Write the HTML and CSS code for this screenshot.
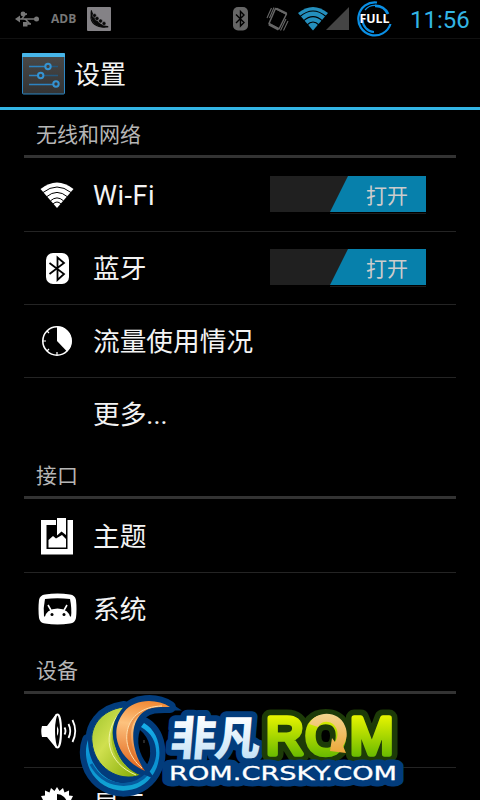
FILE: index.html
```
<!DOCTYPE html>
<html lang="zh-CN">

<head>
    <meta charset="UTF-8">
    <meta name="viewport" content="width=device-width, initial-scale=1.0">
    <title>设置</title>
    <link rel="stylesheet" href="styles.css">
</head>

<body>
    <div class="status">
        <svg class="usb" width="24" height="16" viewBox="0 0 24 16">
            <path d="M3 8H21M6 8C9 8 8 3 12 3H8M9 8C13 8 12 13 16 13H10" fill="none" stroke="#777" stroke-width="1.6" />
            <path d="M0 8L5 4.500V11.500Z" fill="#777" />
            <circle cx="21.500" cy="8" r="2.500" fill="#777" />
            <circle cx="8" cy="3" r="2.400" fill="#777" />
            <rect x="8" y="11" width="4.500" height="4.500" fill="#777" />
        </svg>
        <span class="adb">ADB</span>
        <svg class="pea" width="24" height="24" viewBox="0 0 24 24">
            <rect width="24" height="24" rx="1" fill="#848286" />
            <path d="M4 3C2 12 7 21 21 20.500Q22 20 21 19C15 19 8 14 5 4Q4.500 2.500 4 3Z" fill="#080808" />
            <g fill="#080808" stroke="#848286" stroke-width=".5">
                <circle cx="7.500" cy="8.500" r="1.900" />
                <circle cx="10" cy="11.500" r="2" />
                <circle cx="13.500" cy="14" r="2" />
                <circle cx="17" cy="16.500" r="1.900" />
            </g>
            <path d="M3.500 8C4 15 10 20 20 20.500C12 21.500 2 18 3.500 8Z" fill="#080808" />
        </svg>
        <div class="status-right">
            <svg class="s-bt" width="15" height="24" viewBox="0 0 15 24">
                <rect width="15" height="23.500" rx="5" fill="#666" />
                <path d="M3 7.500L11 15.500L7.500 19V4.500L11 8L3 16" fill="none" stroke="#000" stroke-width="1.400" />
            </svg>
            <svg class="vibrate" width="24" height="26" viewBox="0 0 24 26">
                <path d="M9.500 2.500L20.500 8L13 23L3 17.500Z" fill="none" stroke="#666" stroke-width="1.500" stroke-linejoin="round" />
                <path d="M9 3L11 1.800L21 6.500L20.500 9ZM3 17L13 22L12 24.500L2.500 19.500Z" fill="#666" />
                <path d="M1 12L5.500 2M3.500 12L8 1.500M14.500 24.500L20 13M17.500 24.500L22 15" fill="none" stroke="#666" stroke-width="1.100" />
            </svg>
            <svg class="s-wifi" width="30" height="24" viewBox="0 0 30 24">
                <path d="M0 6Q15 -6 30 6L15 23.500Z" fill="#248fbd" />
                <path d="M2 9.500Q15 -1.500 28 9.500M5.500 13.800Q15 5.500 24.500 13.800M9 18Q15 12 21 18" fill="none" stroke="#000" stroke-width="1.100" />
            </svg>
            <svg class="signal" width="23" height="23" viewBox="0 0 23 23">
                <path d="M0 23L23 0V23Z" fill="#444" />
            </svg>
            <svg class="battery" width="36" height="36" viewBox="0 0 36 36">
                <g fill="none" stroke="#0a90e6">
                    <path d="M20 1.500A16.500 16.500 0 1 0 33.500 23" stroke-width="2.200" />
                    <path d="M18 4.800A13.500 13.500 0 0 1 31 13" stroke-width="2.800" />
                    <path d="M5.500 19A12.500 12.500 0 0 0 17 31" stroke-width="2.200" />
                    <path d="M8 9A13 13 0 0 1 20 4.500" stroke-width="1.200" />
                </g>
                <text x="2.500" y="22" textLength="30" lengthAdjust="spacingAndGlyphs" class="full">FULL</text>
            </svg>
            <span class="clock">11:56</span>
        </div>
    </div>

    <div class="header">
        <svg width="44" height="42" viewBox="0 0 44 42">
            <defs>
                <linearGradient id="panel" x2="0" y2="1">
                    <stop offset="0" stop-color="#494949" />
                    <stop offset="1" stop-color="#333" />
                </linearGradient>
            </defs>
            <rect x=".5" y=".5" width="42" height="40.500" rx="1" fill="url(#panel)" stroke="#2d86c2" />
            <path d="M0 4V1Q0 0 1 0H42Q43 0 43 1V4Z" fill="#47b5e9" />
            <g fill="none" stroke="#2c83c1" stroke-width="1.400">
                <path d="M7 13.500H23M7 22.500H16M7 31.500H32" />
                <path d="M29 13.500H36M22 22.500H36" stroke="#24587e" />
                <g stroke="#3593d2" stroke-width="2">
                    <circle cx="26" cy="13.500" r="2.700" />
                    <circle cx="18.700" cy="22.500" r="2.700" />
                    <circle cx="34" cy="31" r="2.700" />
                </g>
            </g>
        </svg>
        <h1>设置</h1>
    </div>

    <div class="list">
        <h2>无线和网络</h2>
        <ul>
            <li>
                <div class="icon">
                    <svg width="34" height="26" viewBox="0 0 34 26">
                        <path d="M.5 7Q17 -6 33.500 7L17 26Z" fill="#fff" />
                        <path d="M3 10.500Q17 -.5 31 10.500M6.500 14.800Q17 6 27.500 14.800M10.500 18.800Q17 13 23.500 18.800M13 22Q17 18 21 22" fill="none" stroke="#000" stroke-width="1" />
                    </svg>
                </div>
                <span class="latin">Wi-Fi</span>
                <div class="switch"><b>打开</b></div>
            </li>
            <li>
                <div class="icon">
                    <svg width="23" height="31" viewBox="0 0 23 31">
                        <rect width="23" height="31" rx="7" fill="#fff" />
                        <path d="M3.500 10L18 21L11.500 27V4.500L18 10L3.500 21" fill="none" stroke="#000" stroke-width="1.800" />
                    </svg>
                </div>
                <span>蓝牙</span>
                <div class="switch"><b>打开</b></div>
            </li>
            <li>
                <div class="icon">
                    <svg width="30" height="30" viewBox="0 0 30 30">
                        <circle cx="15" cy="15" r="14.200" fill="none" stroke="#fff" stroke-width="1.600" />
                        <path d="M15 15V.5A14.500 14.500 0 0 1 25 25.500Z" fill="#fff" />
                        <path d="M1 15H4M15 29V26M5 5L7 7M5 25L7 23" stroke="#fff" stroke-width="1.200" />
                    </svg>
                </div>
                <span>流量使用情况</span>
            </li>
            <li>
                <div class="icon"></div>
                <span>更多...</span>
            </li>
        </ul>

        <h2>接口</h2>
        <ul>
            <li>
                <div class="icon">
                    <svg width="34" height="37" viewBox="0 0 34 37">
                        <path d="M1 2H16V7H6.500V31H27.500V2H33V36.500H1Z" fill="#fff" />
                        <path d="M17 0H26V17L21.500 13.500L17 17.500Z" fill="#fff" />
                        <path d="M8.500 22L13 18L16 20.500L22 17L26 21V29.500H8.500Z" fill="#fff" />
                    </svg>
                </div>
                <span>主题</span>
            </li>
            <li>
                <div class="icon">
                    <svg width="39" height="32" viewBox="0 0 39 32">
                        <path d="M7 1.500Q19.500 -.5 32 1.500Q37 2 38 7Q39 16 38 25Q37 30 32 30.500Q19.500 32.500 7 30.500Q2 30 1 25Q0 16 1 7Q2 2 7 1.500Z" fill="#fff" />
                        <path d="M7 6Q19.500 4.500 32 6Q34 16 33 23.500H6Q5 15 7 6Z" fill="#000" />
                        <path d="M6 26Q8 15.500 19.500 15.500Q31 15.500 33 26Z" fill="#fff" />
                        <path d="M10 12L14 19M29 12L25 19" stroke="#fff" stroke-width="1.600" />
                        <circle cx="14" cy="21.500" r="1.500" fill="#000" />
                        <circle cx="26" cy="21.500" r="1.500" fill="#000" />
                    </svg>
                </div>
                <span>系统</span>
            </li>
        </ul>

        <h2>设备</h2>
        <ul>
            <li>
                <div class="icon">
                    <svg class="sound" width="36" height="36" viewBox="0 0 36 36">
                        <path d="M1 13H6L15 1V35L6 24H1Q-.5 18 1 13Z" fill="#fff" />
                        <ellipse cx="16.500" cy="18" rx="3.500" ry="16.500" fill="#000" stroke="#fff" stroke-width="2" />
                        <path d="M16 13Q19 18 16 23Z" fill="#fff" />
                        <path d="M23.500 14.500Q25.500 18 23.500 21.500M27.500 11Q31 18 27.500 25M31.500 7Q37 18 31.500 29" fill="none" stroke="#fff" stroke-width="1.800" />
                    </svg>
                </div>
                <span>声音</span>
            </li>
            <li>
                <div class="icon">
                    <svg width="36" height="36" viewBox="0 0 36 36">
                        <path d="M18 1L20.500 5L24 2L25.500 6.500L30 4.500L30 9.500L34 10L32 14L36 18L32 22L34 26L30 27L30 32L25 30L23 34L18 31L13 34L11 30L6 32L6 27L2 26L4 22L0 18L4 14L2 10L6 9.500L6 4.500L10.500 6.500L12 2L15.500 5Z" fill="#fff" />
                        <path d="M18 8A10 10 0 0 1 18 28Z" fill="#000" />
                    </svg>
                </div>
                <span>显示</span>
            </li>
        </ul>
    </div>

    <svg class="logo" width="336" height="110" viewBox="0 0 336 110">
        <defs>
            <linearGradient id="green" x2="1" y2="1">
                <stop offset="0" stop-color="#9cc22a" />
                <stop offset=".4" stop-color="#d0e04f" />
                <stop offset="1" stop-color="#7fa800" />
            </linearGradient>
            <linearGradient id="orange" x1=".6" x2=".5" y2="1">
                <stop offset="0" stop-color="#f28a35" />
                <stop offset=".35" stop-color="#fdc27e" />
                <stop offset="1" stop-color="#e0641b" />
            </linearGradient>
            <linearGradient id="ring" x2="0" y2="1">
                <stop offset="0" stop-color="#17b0ea" />
                <stop offset=".55" stop-color="#0a90d2" />
                <stop offset="1" stop-color="#12a5d2" />
            </linearGradient>
            <linearGradient id="ice" x2="0" y2="1">
                <stop offset=".2" stop-color="#fff" />
                <stop offset="1" stop-color="#b7dcf5" />
            </linearGradient>
            <linearGradient id="lime" gradientUnits="userSpaceOnUse" x1="0" y1="25" x2="0" y2="68">
                <stop offset="0" stop-color="#e9f500" />
                <stop offset="1" stop-color="#65b800" />
            </linearGradient>
            <linearGradient id="gold" x2="0" y2="1">
                <stop offset="0" stop-color="#f4d58e" />
                <stop offset="1" stop-color="#eba83a" />
            </linearGradient>
            <path id="leaf" d="M50 17C26 20 16 38 18 52C20 77 44 93 67 85C43 76 31 46 50 17Z" />
            <path id="flame" d="M96 17C82 8 60 9 50 22C35 41 42 68 71 81C58 63 54 36 68 23C76 16 86 17 96 17Z" />
            <path id="hoop" d="M70 33C86 42 90 66 80 83C66 107 30 107 16 80C11 69 11 58 14 50C14 75 30 91 46 93C66 95 80 82 82 66C83 54 79 44 67 37Z" />
        </defs>
        <g fill="#023c7c" stroke="#023c7c" stroke-width="12" stroke-linejoin="round">
            <use href="#hoop" />
            <use href="#leaf" />
            <use href="#flame" />
        </g>
        <!-- gap between the flame and the ring -->
        <path d="M66 40C76 48 79 62 73 74C65 64 62 52 66 40Z" fill="#000" />
        <path d="M70 50V53" stroke="#555" />
        <use href="#hoop" fill="url(#ring)" />
        <path d="M17 74C30 98 59 101 75 82" fill="none" stroke="#065a9d" stroke-width="3" />
        <use href="#leaf" fill="url(#green)" stroke="#023c7c" stroke-width="1" />
        <path d="M48 21C29 42 37 73 62 84C42 74 32 46 48 21Z" fill="#8eb312" opacity=".7" />
        <path d="M48 20C26 44 33 73 62 85" fill="none" stroke="#eff5a6" stroke-width="1" />
        <use href="#flame" fill="url(#orange)" stroke="#023c7c" stroke-width="7" />
        <use href="#flame" fill="url(#orange)" />
        <path d="M88 16C48 17 43 57 68 78C56 60 51 34 68 23C77 16 84 17 88 16Z" fill="#d9681d" opacity=".45" />
        <path d="M88 16C48 17 43 57 68 78" fill="none" stroke="#ffe0ad" stroke-width="1" />

        <text class="name name-back" x="101" y="65.500" textLength="90" transform="skewX(-5)">非凡</text>
        <text class="rom rom-back" x="192 231.500 276" y="64">ROM</text>
        <text class="site site-back" x="95" y="90" textLength="228" lengthAdjust="spacingAndGlyphs">ROM.CRSKY.COM</text>
        <text class="name" x="101" y="65.500" textLength="90" transform="skewX(-5)" fill="url(#ice)">非凡</text>
        <text class="rom" x="192 231.500 276" y="64" fill="url(#lime)" stroke="url(#lime)">ROM</text>
        <path d="M235 34C242 20 265 20 271 36C274 43 273 50 269 56L272 63L256 61L258 48L261 52C265 46 264 39 260 35C255 30 247 31 244 37Z" fill="url(#gold)" />
        <text class="site" x="95" y="90" textLength="228" lengthAdjust="spacingAndGlyphs">ROM.CRSKY.COM</text>
    </svg>
</body>

</html>
```

FILE: styles.css
```
* {
    box-sizing: border-box;
    margin: 0;
    padding: 0;
}

body {
    position: relative;
    height: 800px;
    overflow: hidden;
    background-color: #000;
    color: #f3f3f3;
    font-family: Roboto, "Noto Sans CJK SC", sans-serif;
}

svg {
    display: block;
    flex: none;
}

.status {
    display: flex;
    align-items: center;
    height: 39px;
    padding: 0 10px 1px 15px;
    border-bottom: 1px solid #111;
}

.adb {
    width: 36px;
    margin-left: 12px;
    color: #777;
    font: bold 12px "Open Sans", sans-serif;
}

.status-right {
    display: flex;
    align-items: center;
    margin-left: auto;
}

.vibrate {
    margin-left: 18px;
}

.s-wifi {
    margin-left: 8px;
}

.signal {
    margin-left: -2px;
}

.battery {
    margin-left: 8px;
}

.full {
    fill: #fff;
    font: bold 13px "Open Sans", sans-serif;
}

.clock {
    width: 60px;
    margin-left: 17px;
    padding-top: 2px;
    color: #33b5e5;
    font-size: 24px;
    line-height: 34px;
}

.header {
    display: flex;
    align-items: center;
    height: 71px;
    padding: 1px 22px 0;
    border-bottom: 3px solid #33b5e5;
}

h1 {
    margin-left: 8px;
    padding-bottom: 2px;
    font-size: 26px;
    font-weight: normal;
}

.list {
    height: 690px;
    padding: 0 24px;
    overflow: hidden;
}

h2 {
    height: 48px;
    padding-left: 12px;
    border-bottom: 3px solid #333;
    color: #b5b5b5;
    font-size: 21px;
    font-weight: normal;
    line-height: 50px;
}

ul {
    padding-top: 1px;
    list-style: none;
}

li {
    display: flex;
    align-items: center;
    height: 73px;
    padding-right: 30px;
    border-bottom: 1px solid #242424;
    font-size: 26.7px;
}

li span {
    padding-bottom: 3px;
}

li .latin {
    padding: 2px 0 0;
    font-size: 27px;
    letter-spacing: 0.5px;
}

li:last-child {
    border-bottom-color: transparent;
}

.icon {
    display: flex;
    justify-content: center;
    width: 66px;
    margin-right: 3px;
}

.sound {
    margin-left: 4px;
}

.switch {
    width: 156px;
    height: 36px;
    margin: 0 0 2px auto;
    background-color: #202020;
}

.switch b {
    display: block;
    height: 36px;
    margin-left: 60px;
    padding-left: 36px;
    background-color: #0780ab;
    clip-path: polygon(18px 0, 100% 0, 100% 100%, 0 100%);
    color: #ccc;
    font-size: 21px;
    font-weight: normal;
    line-height: 40px;
}

.switch::after {
    content: "";
    display: block;
    height: 1px;
    margin: 1px 0 0 60px;
    background-color: #1c1c1c;
}

/* watermark over the list */
.logo {
    position: absolute;
    left: 74px;
    top: 690px;
}

.name {
    font: 900 46px "Noto Sans CJK SC", sans-serif;
}

.name-back {
    fill: #023c7c;
    stroke: #023c7c;
    stroke-width: 12;
    stroke-linejoin: round;
}

.rom {
    font: 52px "Liberation Sans", sans-serif;
    stroke-width: 5.5;
    stroke-linejoin: round;
}

.rom-back {
    fill: #1d3b08;
    stroke: #1d3b08;
    stroke-width: 17;
}

.site {
    fill: #fff;
    stroke: #fff;
    stroke-width: 0.3;
    font: 19px "DejaVu Sans", sans-serif;
}

.site-back {
    fill: #023c7c;
    stroke: #023c7c;
    stroke-width: 13;
    stroke-linejoin: round;
}
```
